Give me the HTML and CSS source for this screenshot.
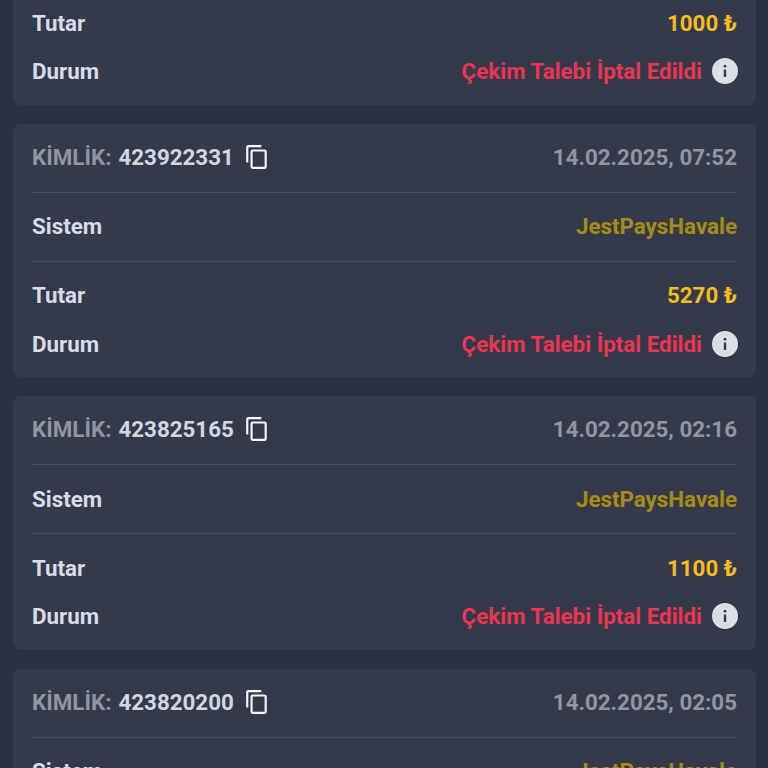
FILE: index.html
```html
<!DOCTYPE html>
<html lang="tr">
<head>
<meta charset="utf-8">
<title>Çekim Geçmişi</title>
<link rel="stylesheet" href="styles.css">
</head>
<body>
<svg class="defs" width="0" height="0" aria-hidden="true">
  <symbol id="copy" viewBox="0 0 24 24"><path d="M16 1H4a2 2 0 0 0-2 2v14h2V3h12V1zm3 4H8a2 2 0 0 0-2 2v14a2 2 0 0 0 2 2h11a2 2 0 0 0 2-2V7a2 2 0 0 0-2-2zm0 16H8V7h11v14z"/></symbol>
  <symbol id="info" viewBox="0 0 26 26"><circle cx="13" cy="13" r="13"/><rect class="info-mark" x="11.8" y="11.4" width="2.4" height="7.6" rx=".4"/><circle class="info-mark" cx="13" cy="8.2" r="1.4"/></symbol>
</svg>
<main class="list">
  <section class="card">
    <header class="card-head">
      <div class="id"><span class="id-label">KİMLİK:</span> <span class="id-value">423922330</span><svg class="copy"><use href="#copy"/></svg></div>
      <time class="date">14.02.2025, 08:10</time>
    </header>
    <div class="row row-ruled"><span>Sistem</span><span class="system">JestPaysHavale</span></div>
    <div class="details">
      <div class="row"><span>Tutar</span><span class="amount">1000 ₺</span></div>
      <div class="row"><span>Durum</span><span class="status">Çekim Talebi İptal Edildi<svg class="info"><use href="#info"/></svg></span></div>
    </div>
  </section>
  <section class="card">
    <header class="card-head">
      <div class="id"><span class="id-label">KİMLİK:</span> <span class="id-value">423922331</span><svg class="copy"><use href="#copy"/></svg></div>
      <time class="date">14.02.2025, 07:52</time>
    </header>
    <div class="row row-ruled"><span>Sistem</span><span class="system">JestPaysHavale</span></div>
    <div class="details">
      <div class="row"><span>Tutar</span><span class="amount">5270 ₺</span></div>
      <div class="row"><span>Durum</span><span class="status">Çekim Talebi İptal Edildi<svg class="info"><use href="#info"/></svg></span></div>
    </div>
  </section>
  <section class="card">
    <header class="card-head">
      <div class="id"><span class="id-label">KİMLİK:</span> <span class="id-value">423825165</span><svg class="copy"><use href="#copy"/></svg></div>
      <time class="date">14.02.2025, 02:16</time>
    </header>
    <div class="row row-ruled"><span>Sistem</span><span class="system">JestPaysHavale</span></div>
    <div class="details">
      <div class="row"><span>Tutar</span><span class="amount">1100 ₺</span></div>
      <div class="row"><span>Durum</span><span class="status">Çekim Talebi İptal Edildi<svg class="info"><use href="#info"/></svg></span></div>
    </div>
  </section>
  <section class="card">
    <header class="card-head">
      <div class="id"><span class="id-label">KİMLİK:</span> <span class="id-value">423820200</span><svg class="copy"><use href="#copy"/></svg></div>
      <time class="date">14.02.2025, 02:05</time>
    </header>
    <div class="row row-ruled"><span>Sistem</span><span class="system">JestPaysHavale</span></div>
    <div class="details">
      <div class="row"><span>Tutar</span><span class="amount">1000 ₺</span></div>
      <div class="row"><span>Durum</span><span class="status">Çekim Talebi İptal Edildi<svg class="info"><use href="#info"/></svg></span></div>
    </div>
  </section>
</main>
</body>
</html>
```
FILE: styles.css
```css
html, body {
  margin: 0;
  height: 100%;
  overflow: hidden;
  background: #2a3044;
}

body {
  font-family: Roboto, "Liberation Sans", sans-serif;
  font-weight: 700;
  font-size: 22.35px;
  color: #d9dce5;
}

.defs {
  position: absolute;
}

/* The list is scrolled part-way through its first card */
.list {
  display: flex;
  flex-direction: column;
  gap: 19px;
  margin-top: -148.6px;
  padding: 0 12px 0 13px;
}

.card {
  height: 253.5px;
  box-sizing: border-box;
  padding: 0 19px;
  background: #343a4c;
  border-radius: 8px;
  flex: none;
}

.card-head {
  display: flex;
  align-items: center;
  justify-content: space-between;
  height: 69px;
  box-sizing: border-box;
  padding-bottom: 2px;
  border-bottom: 1px solid #494f60;
}

.id {
  display: flex;
  align-items: center;
  gap: 7px;
}

.id-label,
.date {
  color: #90959f;
}

.id-value {
  color: #d3d6df;
}

.copy {
  width: 26px;
  height: 26px;
  margin-left: 3px;
  fill: #f4f5f8;
}

.row {
  display: flex;
  align-items: center;
  justify-content: space-between;
  height: 28px;
}

.row-ruled {
  height: 69px;
  box-sizing: border-box;
  padding-bottom: 1.5px;
  border-bottom: 1px solid #494f60;
}

.details {
  display: flex;
  flex-direction: column;
  gap: 20.5px;
  padding-top: 19.2px;
}

.system {
  color: #a88b12;
}

.amount {
  color: #f6bc1f;
}

.status {
  display: flex;
  align-items: center;
  gap: 10px;
  color: #ea3450;
}

.info {
  width: 26px;
  height: 26px;
  margin-right: -1px;
  fill: #dcdfe6;
}

.info-mark {
  fill: #343a4c;
}
```
